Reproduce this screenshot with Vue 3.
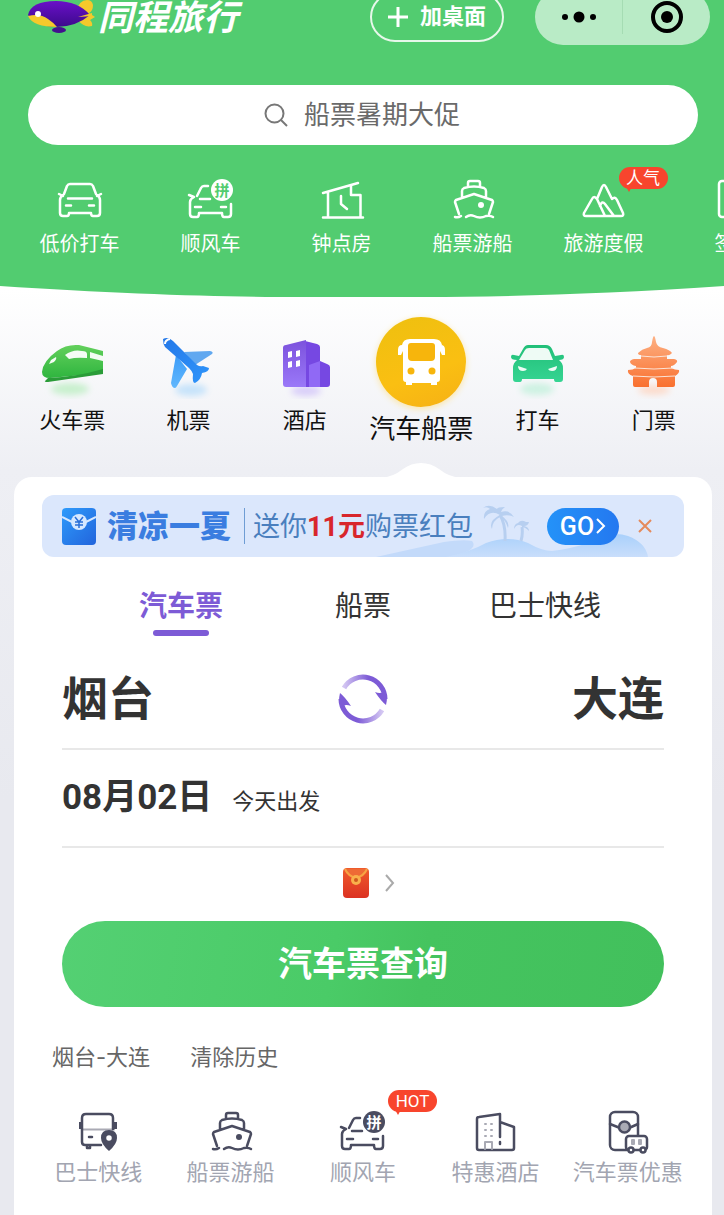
<template>
  <div class="page">
    <svg class="sprite" aria-hidden="true">
      <defs>
        <linearGradient id="g-fish" x1="0" y1="0" x2="0" y2="1">
          <stop offset="0" stop-color="#6a10c8" />
          <stop offset="1" stop-color="#3c0a8c" />
        </linearGradient>
        <linearGradient id="g-train" x1="0" y1="0" x2="0" y2="1">
          <stop offset="0" stop-color="#63d05c" />
          <stop offset="1" stop-color="#2fb53f" />
        </linearGradient>
        <linearGradient id="g-plane" x1="0" y1="0" x2="1" y2="1">
          <stop offset="0" stop-color="#2478e8" />
          <stop offset="1" stop-color="#2f95fb" />
        </linearGradient>
        <linearGradient id="g-wing" x1="0" y1="0" x2="0" y2="1">
          <stop offset="0" stop-color="#3b9bf8" />
          <stop offset="1" stop-color="#62b8fd" />
        </linearGradient>
        <linearGradient id="g-tower" x1="0" y1="0" x2="0" y2="1">
          <stop offset="0" stop-color="#7c52dd" />
          <stop offset="1" stop-color="#9a78f8" />
        </linearGradient>
        <linearGradient id="g-taxi" x1="0" y1="0" x2="0" y2="1">
          <stop offset="0" stop-color="#22bf78" />
          <stop offset="1" stop-color="#35d492" />
        </linearGradient>
        <linearGradient id="g-gate" x1="0" y1="0" x2="0" y2="1">
          <stop offset="0" stop-color="#fdb184" />
          <stop offset="1" stop-color="#f9702f" />
        </linearGradient>
        <linearGradient id="g-swap-a" x1="0" y1="0" x2="1" y2="0">
          <stop offset="0" stop-color="#d3c6f2" />
          <stop offset="0.6" stop-color="#7d5bd6" />
        </linearGradient>
        <linearGradient id="g-swap-b" x1="1" y1="0" x2="0" y2="0">
          <stop offset="0" stop-color="#d3c6f2" />
          <stop offset="0.6" stop-color="#7d5bd6" />
        </linearGradient>
        <linearGradient id="g-coupon" x1="0" y1="0" x2="1" y2="1">
          <stop offset="0" stop-color="#2e9bfb" />
          <stop offset="1" stop-color="#2264dc" />
        </linearGradient>
        <linearGradient id="g-packet" x1="0" y1="0" x2="0" y2="1">
          <stop offset="0" stop-color="#ef5b2c" />
          <stop offset="1" stop-color="#dc3222" />
        </linearGradient>
        <linearGradient id="g-hill" x1="0" y1="0" x2="0" y2="1">
          <stop offset="0" stop-color="#a9d0fb" />
          <stop offset="1" stop-color="#c9defb" />
        </linearGradient>
        <filter id="f-soft" x="-40%" y="-80%" width="180%" height="260%">
          <feGaussianBlur stdDeviation="3" />
        </filter>
      </defs>

      <!-- outline icons, 48 grid -->
      <symbol id="car" viewBox="0 0 48 48">
        <path d="M8 19l3-8q1-2 3-2h20q2 0 3 2l3 8M3 19l4 2M45 19l-4 2M7 20q-3 2-3 5v13q0 3 3 3h4q2 0 2-3h22q0 3 2 3h4q3 0 3-3V25q0-3-3-5M12 23.500h24M10 30.500h5M33 30.500h5" />
      </symbol>
      <symbol id="carpool" viewBox="0 0 48 48">
        <path d="M21 11h-4q-2 0-3 2l-4 8M2 20l5 2M7 22q-4 2-4 5v12q0 3 3 3h4q2 0 2-4h23q0 4 2 4h4q3 0 3-3V29M13 24h10M8 32h6M34 32h5" />
        <circle class="solid" cx="35" cy="15" r="11" />
        <text class="pin-text" x="35" y="20.500" text-anchor="middle">拼</text>
      </symbol>
      <symbol id="house" viewBox="0 0 48 48">
        <path d="M5 18L40 8M10 17v25M5 42.500h40M42.500 42V20H33v-9M23 21v8l6 5" />
      </symbol>
      <symbol id="ship" viewBox="0 0 48 48">
        <path d="M19 11V8q0-2 2-2h8q2 0 2 2v3M13 22v-6q0-2 2-3 10-3 20 0 2 1 2 3v6M10 39L6 27q0-1 1-2l18-6 18 6q1 1 1 2l-4 12M6 42q3 1 6-1M17 42q4-3 8-1 6 3 12 0 4-1 7 1" />
        <circle class="dot" cx="32" cy="30" r="3" />
      </symbol>
      <symbol id="mountain" viewBox="0 0 48 48">
        <path d="M6 41q-3 0-2-3l8-14q2-4 5 0l5-12q2-4 4 0l6 12q3-3 5 1l6 13q1 3-2 3zM17 24l8 17M20 31q2-6 5-2l9 12" />
      </symbol>
      <symbol id="visa" viewBox="0 0 48 48">
        <rect x="8" y="6" width="32" height="36" rx="3" />
      </symbol>
      <symbol id="shuttle" viewBox="0 0 48 48">
        <path class="thin" d="M9 22.500h31" />
        <path d="M27 38H11q-3 0-3-3V11q0-4 4-4h23q4 0 4 4v11M15 30h3M13 38v3h3v-3" />
        <path class="solid" d="M5 15h4v7H5zM39 15h4v7h-4zM35 23q8 0 8 8 0 6-8 13-8-7-8-13 0-8 8-8z" />
        <circle class="hole" cx="35" cy="31" r="4" />
      </symbol>
      <symbol id="hotel" viewBox="0 0 48 48">
        <path d="M29 30V7L8 10q-2 0-2 2v29q0 2 2 2h33q2 0 2-2V20L29 15M29 35v2" />
        <path class="thin" d="M14 17h1M20 17h1M14 23h1M20 23h1M14 29h1M20 29h1M14 42v-7h7v7" />
      </symbol>
      <symbol id="voucher" viewBox="0 0 48 48">
        <rect x="6" y="5" width="28" height="38" rx="5" />
        <path d="M6 17l10 4M34 17l-9 4" />
        <circle class="seal" cx="20.500" cy="20" r="5.500" />
        <rect class="hole" x="22" y="29" width="21" height="14" rx="3" />
        <path class="thin" d="M28 33h2v4h-2zM35 33h2v4h-2z" />
        <circle class="hole" cx="27" cy="43" r="2.500" />
        <circle class="hole" cx="39" cy="43" r="2.500" />
      </symbol>

      <!-- coloured icons, 66 grid -->
      <symbol id="train" viewBox="0 0 66 66">
        <ellipse cx="31" cy="56" rx="19" ry="6" fill="#c8f0cd" filter="url(#f-soft)" />
        <path fill="url(#g-train)" d="M3 39Q4 28 18 18q9-7 22-6l24 6v22L11 45q-8 0-8-6z" />
        <path fill="#2a9c38" d="M9 45q28-1 55-9v5L9 49q-4 0-3-1z" />
        <path fill="#f4fcf4" d="M26 22q8-6 17-4 5 0 5 3v4q-11-1-18 1zM51 19l13 4v5l-13-3zM12 27l5-3q1 2-2 5l-5 2z" />
      </symbol>
      <symbol id="plane" viewBox="0 0 66 66">
        <ellipse cx="36" cy="57" rx="16" ry="6" fill="#c6e3fa" filter="url(#f-soft)" />
        <path fill="#61a8f0" d="M29 19l26-1q4 1 2 3L40 32z" />
        <path fill="url(#g-wing)" d="M21 22l-5 28q1 5 4 5 1 0 2-2l10-17z" />
        <path fill="url(#g-plane)" d="M8 6q5-3 10 2l24 24q3 2 6 1l6 2q0 4-7 5-1 7-7 10-3 0-2-9-1-3-4-6L10 14Q8 11 8 6z" />
        <path d="M10 11q0-4 5-5" fill="none" stroke="#fff" stroke-width="2" />
      </symbol>
      <symbol id="tower" viewBox="0 0 66 66">
        <ellipse cx="34" cy="58" rx="15" ry="5" fill="#d8cdf9" filter="url(#f-soft)" />
        <path fill="#7648e2" d="M33 8l12 3q3 1 3 3v14l7 3q3 1 3 3v17q0 3-3 3H33z" />
        <path fill="#9069f5" d="M37 32l11-4v26H37z" />
        <path fill="url(#g-tower)" d="M11 15q0-3 3-3l20-5v47H14q-3 0-3-3z" />
        <path fill="#fff" d="M16 19l4-1v6l-4 1zM24 18l4-1v6l-4 1zM16 29l4-1v6l-4 1zM24 28l4-1v6l-4 1z" />
      </symbol>
      <symbol id="bus" viewBox="0 0 90 90">
        <path fill="#fff" d="M34 22h24q7 0 8 6h-1q4 0 4 5v5h-3l-2-4v28q0 3-3 3v3h-6v-2H36v2h-6v-3q-3 0-3-3V34l-2 4h-3v-5q0-5 4-5 1-6 8-6z" />
        <path fill="#f7b50c" d="M35 26h21q3 0 3 3v11q0 4-4 4H36q-4 0-4-4V29q0-3 3-3z" />
        <circle cx="35" cy="54" r="3.500" fill="#f7b50c" />
        <circle cx="56" cy="54" r="3.500" fill="#f7b50c" />
      </symbol>
      <symbol id="taxi" viewBox="0 0 66 66">
        <ellipse cx="33" cy="56" rx="17" ry="6" fill="#cdf2e2" filter="url(#f-soft)" />
        <path fill="url(#g-taxi)" d="M24 12h18q4 0 6 4l3 7 6-1q3-1 3 2t-5 3q4 3 4 8v11q0 3-3 3h-4q-2 0-2-3H18q0 3-2 3h-4q-3 0-3-3V35q0-5 4-8-6 0-6-3t3-2l5 1 4-7q2-4 5-4z" />
        <path fill="#eefbf5" d="M25 15h16q3 0 4 2l4 10H15l6-10q1-2 4-2zM14 33l9 3q-1 2-4 2-5 0-5-5zM53 33l-9 3q1 2 4 2 5 0 5-5z" />
      </symbol>
      <symbol id="gate" viewBox="0 0 66 66">
        <ellipse cx="33" cy="57" rx="16" ry="5" fill="#fcdccc" filter="url(#f-soft)" />
        <path fill="url(#g-gate)" d="M33 3q1 0 2 6 1 5 7 6 7 2 9 5-3 3-5 2v4h7q4 1 3 3-3 4-6 4v2q4 2 8 2 1 3-4 6v9q0 2-2 2H36v-5q0-4-4-4-4 0-4 4v5H14q-2 0-2-2v-9q-6-2-5-6 5 0 8-2v-2q-5-1-6-4 0-2 4-3h7v-4q-3 0-3-2 4-4 9-5 5-1 5-6 1-6 2-6z" />
        <path d="M20 23q13 2 26 0M14 35q19 2 38 0M12 43q21 2 42 0" fill="none" stroke="#fbe3d6" stroke-width="1" />
      </symbol>
    </svg>

    <header class="header">
      <div class="topbar">
        <h1 class="brand">
          <svg class="brand-logo" viewBox="0 0 68 36" aria-hidden="true">
            <path fill="#f5c92b" d="M48 13Q51 1 59 1q5 0 6 5 0 6-4 8l6 4-5 3q3 3 2 6-8 2-14-6z" />
            <ellipse cx="31" cy="31" rx="7" ry="3" fill="#43108f" />
            <path fill="url(#g-fish)" d="M0 16Q3 2 28 2q22 0 34 14-14 12-34 12Q8 27 0 16z" />
            <path fill="#f5c92b" d="M0 17q12-3 20 3 6 4 9 8Q5 28 0 17z" />
            <path fill="#f5c92b" d="M50 18l14-4v3z" />
            <circle cx="10" cy="15" r="3" fill="#fff" />
          </svg>
          <span class="brand-name">同程旅行</span>
        </h1>
        <button class="add-desktop" type="button">
          <svg class="plus" viewBox="0 0 20 20" aria-hidden="true"><path d="M10 0v20M0 10h20" /></svg>
          加桌面
        </button>
        <div class="capsule">
          <button type="button" aria-label="更多">
            <svg class="more" viewBox="0 0 36 12" aria-hidden="true">
              <circle cx="4" cy="6" r="3" />
              <circle cx="18" cy="6" r="5.500" />
              <circle cx="32" cy="6" r="3" />
            </svg>
          </button>
          <button type="button" aria-label="关闭">
            <svg class="target" viewBox="0 0 34 34" aria-hidden="true">
              <circle class="ring" cx="17" cy="17" r="14" />
              <circle cx="17" cy="17" r="6" />
            </svg>
          </button>
        </div>
      </div>

      <label class="search">
        <svg class="search-icon" viewBox="0 0 24 24" aria-hidden="true">
          <circle cx="10.500" cy="10.500" r="9" />
          <path d="M17 17l6 6" />
        </svg>
        <input type="text" placeholder="船票暑期大促" aria-label="搜索">
      </label>

      <nav class="quick">
        <a v-for="item in quick" :key="item.name" class="quick-item" href="#">
          <svg class="line-icon" aria-hidden="true"><use :href="'#' + item.icon" /></svg>
          <span>{{ item.name }}</span>
          <em v-if="item.tag" class="tag">{{ item.tag }}</em>
        </a>
      </nav>
    </header>
    <svg class="curve" viewBox="0 0 724 11" preserveAspectRatio="none" aria-hidden="true">
      <path d="M0 0C120 8 220 11 300 11H424C504 11 604 8 724 0z" />
    </svg>

    <nav class="category">
      <a
        v-for="item in categories"
        :key="item.name"
        class="category-item"
        :class="{ active: item.active }"
        href="#"
      >
        <svg class="category-icon" aria-hidden="true"><use :href="'#' + item.icon" /></svg>
        <span>{{ item.name }}</span>
        <svg v-if="item.active" class="bump" viewBox="0 0 80 15" aria-hidden="true">
          <path d="M0 15Q12 14 22 6 30 0 40 0T58 6Q68 14 80 15z" />
        </svg>
      </a>
    </nav>

    <main class="card">
      <div class="banner">
        <svg class="banner-art" viewBox="0 0 322 62" aria-hidden="true">
          <path fill="#c3dafa" d="M14 62Q50 54 82 47q20-3 28-1 5 6-6 11l-14 5z" />
          <path fill="url(#g-hill)" d="M84 62q26-6 40-14 22-8 42 0 14 8 24 8 18-2 40-9 18-12 36-6 18 7 20 21z" />
          <path fill="none" stroke="#b7cff0" stroke-width="3" d="M138 20q6 10 5 26M160 32q1 7-1 14" />
          <path fill="#b7cff0" d="M138 20q-10-6-16 4-1-8 6-10-3-3-7-1 6-5 14 1 0-2 8-2-3 2-4 5 8-3 13 5-6-3-12-1 8 6 6 12-3-9-8-11-8 4-8 12-4-8 8-14zM160 31q-5-3-8 3 0-5 4-6 3-4 8-1l3 0q-1 4-5 4 5 1 5 5-4-4-7-4z" />
        </svg>
        <svg class="coupon" viewBox="0 0 34 37" aria-hidden="true">
          <rect width="34" height="37" rx="4" fill="url(#g-coupon)" />
          <path d="M0 9l10 5M34 9l-10 5" fill="none" stroke="#d6e8ff" stroke-width="2" />
          <circle cx="17" cy="14" r="8" fill="#d6e8ff" />
          <path d="M13 9l4 5 4-5M17 14v6M13 14h8M13 17h8" fill="none" stroke="#2a6fd8" stroke-width="1.500" />
        </svg>
        <strong class="banner-title">清凉一夏</strong>
        <p class="banner-text">送你<b>11元</b>购票红包</p>
        <button class="go" type="button">
          GO
          <svg viewBox="0 0 10 16" aria-hidden="true"><path d="M1 1l7 7-7 7" /></svg>
        </button>
        <button class="close" type="button" aria-label="关闭">
          <svg viewBox="0 0 14 14" aria-hidden="true"><path d="M1 1l12 12M13 1L1 13" /></svg>
        </button>
      </div>

      <div class="tabs" role="tablist">
        <button
          v-for="(tab, i) in tabs"
          :key="tab"
          type="button"
          role="tab"
          class="tab"
          :class="{ active: current === i }"
          :aria-selected="current === i"
          @click="current = i"
        >
          {{ tab }}
        </button>
      </div>

      <div class="form">
        <div class="row cities">
          <button type="button">{{ from }}</button>
          <button class="swap" type="button" aria-label="交换" @click="swap">
            <svg viewBox="0 0 50 50" aria-hidden="true">
              <path d="M6 14A22 22 0 0 1 47 25" fill="none" stroke="url(#g-swap-a)" stroke-width="5" />
              <path d="M44 36A22 22 0 0 1 3 25" fill="none" stroke="url(#g-swap-b)" stroke-width="5" />
              <path fill="#7d5bd6" d="M37 18q5 2 8 0l4 5q0 4-1 8-5-4-11-13zM13 32q-5-2-8 0l-4-5q0-4 1-8 5 4 11 13z" />
            </svg>
          </button>
          <button type="button">{{ to }}</button>
        </div>
        <button class="row date" type="button">
          <strong>08月02日</strong>
          <span>今天出发</span>
        </button>
        <button class="packet" type="button" aria-label="红包">
          <svg class="packet-icon" viewBox="0 0 26 30" aria-hidden="true">
            <rect width="26" height="30" rx="4" fill="url(#g-packet)" />
            <path d="M2 1q3 7 11 9 8-2 11-9" fill="#ee6a35" stroke="#f7a343" stroke-width="2" />
            <circle cx="13" cy="12" r="5" fill="#f9b04b" />
            <circle cx="13" cy="12" r="2" fill="#cf5a1e" />
          </svg>
          <svg class="arrow" viewBox="0 0 10 18" aria-hidden="true"><path d="M1 1l7 8-7 8" /></svg>
        </button>
        <button class="submit" type="button">汽车票查询</button>
      </div>

      <div class="history">
        <a href="#">烟台-大连</a>
        <button type="button">清除历史</button>
      </div>

      <nav class="services">
        <a v-for="item in services" :key="item.name" class="service" href="#">
          <svg class="line-icon" aria-hidden="true"><use :href="'#' + item.icon" /></svg>
          <span>{{ item.name }}</span>
          <em v-if="item.tag" class="tag">{{ item.tag }}</em>
        </a>
      </nav>
    </main>
  </div>
</template>

<script setup>
import { ref } from 'vue';

const quick = [
  { name: '低价打车', icon: 'car' },
  { name: '顺风车', icon: 'carpool' },
  { name: '钟点房', icon: 'house' },
  { name: '船票游船', icon: 'ship' },
  { name: '旅游度假', icon: 'mountain', tag: '人气' },
  { name: '签证', icon: 'visa' },
]

const categories = [
  { name: '火车票', icon: 'train' },
  { name: '机票', icon: 'plane' },
  { name: '酒店', icon: 'tower' },
  { name: '汽车船票', icon: 'bus', active: true },
  { name: '打车', icon: 'taxi' },
  { name: '门票', icon: 'gate' },
]

const services = [
  { name: '巴士快线', icon: 'shuttle' },
  { name: '船票游船', icon: 'ship' },
  { name: '顺风车', icon: 'carpool', tag: 'HOT' },
  { name: '特惠酒店', icon: 'hotel' },
  { name: '汽车票优惠', icon: 'voucher' },
]

const tabs = ['汽车票', '船票', '巴士快线']
const current = ref(0)

const from = ref('烟台')
const to = ref('大连')

const swap = () => {
  [from.value, to.value] = [to.value, from.value]
}
</script>

<style>
body {
  margin: 0;
  background: #e8e9ef;
}
</style>

<style scoped>
.page {
  display: flex;
  flex-direction: column;
  min-height: 100vh;
  overflow: hidden;
  font-family: Roboto, "Noto Sans CJK SC", sans-serif;
  color: #333;
  background: linear-gradient(180deg, #fff 290px, #eeeff4 470px, #e8e9ef 800px);
}

.sprite {
  position: absolute;
  width: 0;
  height: 0;
}

button {
  padding: 0;
  border: 0;
  background: none;
  color: inherit;
  font: inherit;
  cursor: pointer;
}

a {
  color: inherit;
  text-decoration: none;
}

/* header */
.header {
  background: #52cc70;
  color: #fff;
}

.topbar {
  display: flex;
  align-items: center;
  height: 34px;
  padding: 0 14px 0 28px;
}

.brand {
  display: flex;
  align-items: center;
  gap: 2px;
  margin: 0 auto 0 0;
}

.brand-logo {
  width: 68px;
  height: 36px;
}

.brand-name {
  padding-top: 4px;
  font-size: 35px;
  line-height: 34px;
  font-style: italic;
  font-weight: 700;
}

.add-desktop {
  display: flex;
  align-items: center;
  justify-content: center;
  gap: 12px;
  box-sizing: border-box;
  width: 134px;
  height: 50px;
  margin-right: 31px;
  border: 2px solid #e6f8ea;
  border-radius: 25px;
  font-size: 22px;
  font-weight: 700;
  line-height: 22px;
}

.plus {
  width: 20px;
  height: 20px;
  fill: none;
  stroke: #fff;
  stroke-width: 3;
}

.capsule {
  display: flex;
  align-items: center;
  width: 175px;
  height: 56px;
  border-radius: 28px;
  background: #b9ebc6;
}

.capsule button {
  display: flex;
  flex: 1;
  align-items: center;
  justify-content: center;
  height: 34px;
}

.capsule button + button {
  border-left: 1px solid #a5dcb3;
}

.more {
  width: 36px;
  height: 12px;
}

.target {
  width: 34px;
  height: 34px;
}

.target .ring {
  fill: none;
  stroke: #000;
  stroke-width: 4;
}

.search {
  display: flex;
  align-items: center;
  justify-content: center;
  gap: 16px;
  height: 60px;
  margin: 51px 26px 0 28px;
  border-radius: 30px;
  background: #fff;
}

.search-icon {
  width: 24px;
  height: 24px;
  fill: none;
  stroke: #777;
  stroke-width: 2;
}

.search input {
  width: 158px;
  padding: 0;
  border: 0;
  outline: 0;
  background: none;
  color: #333;
  font: inherit;
  font-size: 26px;
}

.search input::placeholder {
  color: #6a6a6a;
  opacity: 1;
}

.quick {
  display: flex;
  overflow: hidden;
  padding: 18px 0 21px 14px;
}

.quick-item,
.service {
  --pin-text: #52cc70;
  position: relative;
  display: flex;
  flex-direction: column;
  align-items: center;
  padding-top: 12px;
}

.quick-item {
  flex: 0 0 131px;
  font-size: 20px;
  line-height: 42px;
}

.line-icon {
  width: 48px;
  height: 48px;
  fill: none;
  stroke: currentColor;
  stroke-width: 2.5;
  stroke-linecap: round;
  stroke-linejoin: round;
}

.solid,
.dot {
  fill: currentColor;
  stroke: none;
}

.seal {
  fill: #a9aab4;
}

.pin-text {
  fill: var(--pin-text);
  stroke: none;
  font-size: 15px;
  font-weight: 700;
}

.thin {
  stroke: #a9aab4;
  stroke-width: 2;
}

.hole {
  fill: #fff;
}

.tag {
  position: absolute;
  top: 4px;
  left: calc(50% + 15px);
  width: 49px;
  border-radius: 11px;
  background: #f8452d;
  color: #fff;
  font-size: 17px;
  font-style: normal;
  line-height: 22px;
  text-align: center;
}

.tag::after {
  content: '';
  position: absolute;
  top: 18px;
  left: 6px;
  border: 4px solid transparent;
  border-top: 7px solid #f8452d;
}

.curve {
  display: block;
  width: 100%;
  height: 11px;
  fill: #52cc70;
}

/* categories */
.category {
  display: flex;
  padding: 0 12px 0 14px;
}

.category-item {
  display: flex;
  flex: 1;
  flex-direction: column;
  align-items: center;
  padding-top: 36px;
  color: #111;
  font-size: 22px;
  line-height: 44px;
  white-space: nowrap;
}

.category-icon {
  width: 66px;
  height: 66px;
}

.category-item.active {
  padding-top: 20px;
  font-size: 26px;
}

.active .category-icon {
  width: 90px;
  height: 90px;
  border-radius: 50%;
  background: linear-gradient(160deg, #eec00f, #fabf12 60%, #f6b015);
  box-shadow: 0 2px 6px #fbe6a8;
}

.bump {
  width: 80px;
  height: 15px;
  margin-top: 12px;
  fill: #fff;
}

/* card */
.card {
  flex: 1;
  margin: -1px 12px 0 14px;
  padding: 18px 18px 20px;
  border-radius: 18px 18px 0 0;
  background: #fff;
}

.banner {
  position: relative;
  display: flex;
  align-items: center;
  height: 62px;
  margin: 0 10px;
  padding: 0 32px 0 20px;
  border-radius: 12px;
  background: #dbe7fc;
  overflow: hidden;
}

.banner > * {
  position: relative;
}

.banner .banner-art {
  position: absolute;
  right: 0;
  bottom: 0;
  width: 322px;
  height: 62px;
}

.coupon {
  width: 34px;
  height: 37px;
}

.banner-title {
  margin: 0 13px 0 11px;
  padding-top: 2px;
  color: #3a7de0;
  font-size: 31px;
  font-weight: 900;
  line-height: 34px;
}

.banner-text {
  margin: 0;
  padding: 2px 0 0 8px;
  border-left: 1px solid #6f9dd4;
  color: #4a7fbe;
  font-size: 27px;
  line-height: 34px;
  white-space: nowrap;
}

.banner-text b {
  color: #d8262c;
}

.go {
  display: flex;
  align-items: center;
  justify-content: center;
  gap: 2px;
  width: 72px;
  height: 37px;
  margin-left: auto;
  border-radius: 19px;
  background: linear-gradient(90deg, #2492f8, #2478f0);
  color: #fff;
  font-size: 25px;
  font-weight: 500;
}

.go svg {
  width: 10px;
  height: 16px;
  fill: none;
  stroke: #fff;
  stroke-width: 2;
}

.close {
  display: flex;
  margin-left: 19px;
}

.close svg {
  width: 14px;
  height: 14px;
  fill: none;
  stroke: #e58a5c;
  stroke-width: 2;
}

.tabs {
  display: flex;
  margin: 28px 58px 16px;
}

.tab {
  display: flex;
  flex: 1;
  flex-direction: column;
  align-items: center;
  gap: 1px;
  font-size: 28px;
  line-height: 44px;
}

.tab::after {
  content: '';
  width: 56px;
  height: 6px;
  border-radius: 3px;
}

.tab.active {
  color: #7d5bd6;
  font-weight: 700;
}

.tab.active::after {
  background: #7d5bd6;
}

.form {
  display: flex;
  flex-direction: column;
  margin: 0 30px;
}

.row {
  display: flex;
  align-items: center;
  box-sizing: border-box;
  height: 98px;
  border-bottom: 2px solid #e8e8e8;
}

.cities {
  justify-content: space-between;
  padding-bottom: 2px;
  font-size: 46px;
  font-weight: 700;
  line-height: 50px;
}

.swap svg {
  display: block;
  width: 50px;
  height: 50px;
}

.date {
  align-items: baseline;
  gap: 20px;
  line-height: 96px;
}

.date strong {
  font-size: 35px;
}

.date span {
  font-size: 22px;
}

.packet {
  display: flex;
  align-items: center;
  justify-content: center;
  gap: 16px;
  height: 73px;
  padding: 0 0 4px 12px;
}

.packet-icon {
  width: 26px;
  height: 30px;
}

.arrow {
  width: 10px;
  height: 18px;
  fill: none;
  stroke: #aaa;
  stroke-width: 2;
}

.submit {
  height: 86px;
  border-radius: 43px;
  background: linear-gradient(100deg, #54d073, #4acb67 45%, #45c45f 60%, #42c05c);
  color: #fff;
  font-size: 34px;
  font-weight: 700;
  line-height: 40px;
}

.history {
  display: flex;
  gap: 40px;
  margin: 30px 20px 18px;
  color: #666;
  font-family: Inter, "Noto Sans CJK SC", sans-serif;
  font-size: 22px;
  line-height: 40px;
}

.services {
  display: flex;
}

.service {
  --pin-text: #fff;
  flex: 1;
  color: #4a4c60;
  font-size: 22px;
  line-height: 36px;
}

.service span {
  color: #a2a5b1;
  white-space: nowrap;
}

.service .tag {
  top: -5px;
  left: calc(50% + 25px);
}
</style>
